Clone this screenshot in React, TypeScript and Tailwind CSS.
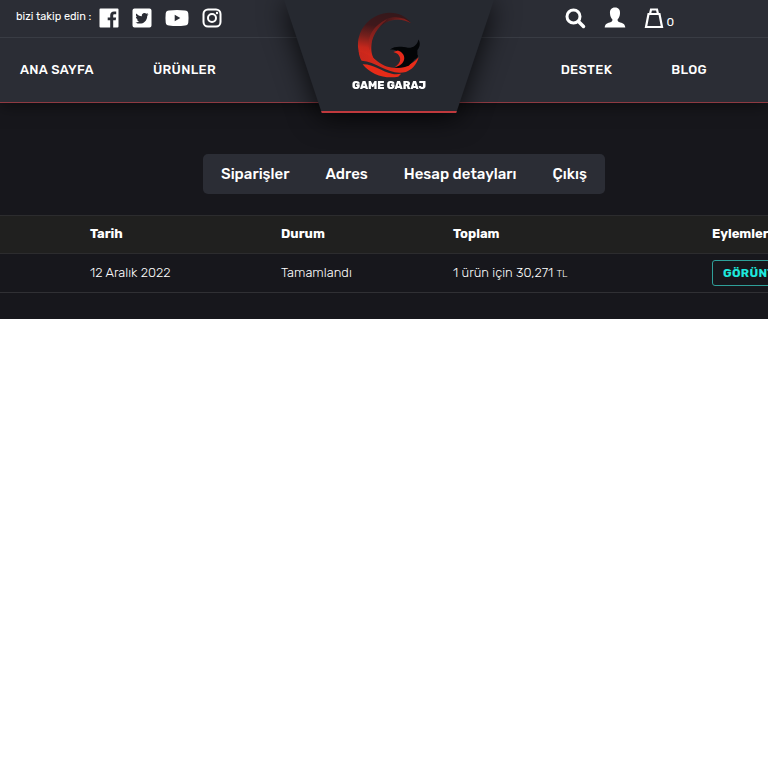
import React from "react";

const social = [
  {
    name: "Facebook",
    width: "w-5",
    box: "0 0 20 20",
    d: "M1.5 0.5h17a1 1 0 0 1 1 1v17a1 1 0 0 1-1 1h-4.3v-7.2h2.5l.4-2.9h-2.9V7.6c0-.9.3-1.4 1.5-1.4h1.5V3.6c-.4 0-1.2-.1-2.2-.1-2.3 0-3.8 1.3-3.8 3.8v2.1H8.7v2.9h2.5v7.2H1.5a1 1 0 0 1-1-1v-17a1 1 0 0 1 1-1z",
  },
  {
    name: "Twitter",
    width: "w-5",
    box: "0 0 20 20",
    d: "M2.5 0.5h15a2 2 0 0 1 2 2v15a2 2 0 0 1-2 2h-15a2 2 0 0 1-2-2v-15a2 2 0 0 1 2-2zM16.5 6.2l-1.5.4 1.1-1.5-1.7.7a2.7 2.7 0 0 0-4.6 2.4C7.5 8.1 5.6 7 4.3 5.4c-.7 1.2-.3 2.8.8 3.6l-1.2-.3c0 1.3.9 2.4 2.2 2.6l-1.2.1c.3 1.1 1.3 1.8 2.5 1.9-1.1.9-2.5 1.3-3.9 1.1 5.5 3.2 11.7-.4 11.7-6.5z",
  },
  {
    name: "YouTube",
    width: "w-6",
    box: "0 0 24 20",
    d: "M4 2.5Q12 1.5 20 2.5Q23 2.7 23.3 5.5Q23.8 10 23.3 14.5Q23 17.3 20 17.5Q12 18.5 4 17.5Q1 17.3.7 14.5Q.2 10 .7 5.5Q1 2.7 4 2.5zM9.7 6.8v6.4l5.6-3.2z",
  },
];

const tabs = ["Siparişler", "Adres", "Hesap detayları", "Çıkış"];

function Logo() {
  return (
    <svg viewBox="35 20 190 200" className="h-[66px] w-[64px]" aria-hidden="true">
      <defs>
        <linearGradient id="moon" x1="0.6" y1="0" x2="0.45" y2="1">
          <stop offset="0" stopColor="#35181b" />
          <stop offset="0.28" stopColor="#3f181b" />
          <stop offset="0.5" stopColor="#76201c" />
          <stop offset="0.72" stopColor="#c4271c" />
          <stop offset="1" stopColor="#e72b1a" />
        </linearGradient>
        <linearGradient id="tip" x1="0" y1="0" x2="1" y2="0">
          <stop offset="0" stopColor="#8a1f1b" stopOpacity="0" />
          <stop offset="1" stopColor="#9c211b" />
        </linearGradient>
        <linearGradient id="wave" x1="0" y1="0" x2="1" y2="0">
          <stop offset="0" stopColor="#c9271c" />
          <stop offset="1" stopColor="#ed2c18" />
        </linearGradient>
      </defs>
      <path
        fill="url(#moon)"
        d="M197 54C180 30 153 19 122 23C73 29 34 71 36 125C37 140 42 154 48 162C68 158 82 166 99 180C81 164 74 143 77 119C80 91 94 68 118 53C144 38 171 39 197 54Z"
      />
      <path d="M72 136C60 104 78 62 124 42C98 66 76 96 72 136Z" fill="#a3241d" opacity="0.5" />
      <path d="M82 148C72 112 84 78 114 54C96 80 84 108 82 148Z" fill="#262930" opacity="0.6" />
      <path fill="url(#tip)" d="M197 54C178 36 150 30 118 42L108 60C136 40 170 38 197 54Z" />
      <path
        fill="url(#wave)"
        d="M38 139C63 143 82 159 101 174C128 194 180 201 220 157C213 180 199 195 181 202C133 215 96 172 47 168C42 160 39 149 38 139Z"
      />
      <path
        fill="#e72b18"
        d="M50 178C83 177 108 200 139 207C150 210 160 208 167 207L158 216C116 224 74 208 50 178Z"
      />
      <path
        fill="#030507"
        d="M133 134C149 121 171 126 187 128C202 129 216 121 219 103C226 113 224 126 216 135L216 149C221 155 214 162 208 163C202 172 193 177 190 183C177 188 163 190 149 188C171 174 176 149 156 139C149 135 141 134 133 134Z"
      />
      <path
        fill="#e52a1b"
        d="M143 141C166 146 174 171 147 187C181 183 187 147 157 137Z"
      />
    </svg>
  );
}

const navLink = "text-[13px] leading-5 font-medium tracking-wide text-white whitespace-nowrap";
const headCell = "pb-0.5 text-left text-[13px] font-bold";

export default function App() {
  return (
    <div className="overflow-hidden bg-white font-[Rubik,Roboto,'Noto_Sans',sans-serif] text-white">
      <div className="bg-[#17171c] pb-[26px]">
        <header className="relative border-b border-[#8e3a42] bg-[#2b2d35] shadow-[0_2px_16px_rgba(0,0,0,0.5)]">
          <div className="flex h-[38px] items-center justify-between border-b border-[#393c44] pr-[94px] pb-0.5 pl-4">
            <div className="flex items-center">
              <span className="mr-2 text-[11px] whitespace-nowrap">bizi takip edin :</span>
              <div className="flex items-center gap-[13px]">
                {social.map((s) => (
                  <a key={s.name} href="#" aria-label={s.name}>
                    <svg viewBox={s.box} className={s.width + " h-5"} fill="#fff" fillRule="evenodd">
                      <path d={s.d} />
                    </svg>
                  </a>
                ))}
                <a href="#" aria-label="Instagram">
                  <svg viewBox="0 0 20 20" className="h-5 w-5" fill="none" stroke="#fff" strokeWidth="2">
                    <rect x="1.5" y="1.5" width="17" height="17" rx="4.5" />
                    <circle cx="10" cy="10" r="4" />
                    <circle cx="15" cy="5" r="1.2" fill="#fff" stroke="none" />
                  </svg>
                </a>
              </div>
            </div>
            <div className="flex items-center gap-[18px]">
              <button type="button" aria-label="Ara">
                <svg viewBox="0 0 22 22" className="h-[22px] w-[22px]" fill="none" stroke="#fff">
                  <circle cx="9.5" cy="9.5" r="6.5" strokeWidth="3" />
                  <path d="M14.5 14.5L19.5 19.5" strokeWidth="3.5" strokeLinecap="round" />
                </svg>
              </button>
              <a href="#" aria-label="Hesabım">
                <svg viewBox="0 0 22 22" className="h-[22px] w-[22px]" fill="#fff">
                  <path d="M11 .5c-3.7 0-5.3 2.5-5 6 .1 2.5 1 4.5 2.3 5.8.4 1.2-.1 2.2-1.3 2.7C3.5 16.3 1 16.5.7 20.5h20.6c-.3-4-2.8-4.2-6.3-5.5-1.2-.5-1.7-1.5-1.3-2.7C15 11 15.9 9 16 6.5c.3-3.5-1.3-6-5-6z" />
                </svg>
              </a>
              <a href="#" aria-label="Sepet" className="flex items-end gap-0.5">
                <svg viewBox="0 0 20 22" className="h-[22px] w-5" fill="none" stroke="#fff" strokeWidth="2.2">
                  <path d="M4.5 7h11l2.5 13H2zM6 7l1-4.5h6l1 4.5" />
                </svg>
                <span className="text-xs leading-[14px]">0</span>
              </a>
            </div>
          </div>
          <nav className="flex h-16 items-center justify-between pr-[61px] pl-5">
            <div className="flex gap-[59px]">
              <a href="#" className={navLink}>ANA SAYFA</a>
              <a href="#" className={navLink}>ÜRÜNLER</a>
            </div>
            <div className="flex gap-[59px]">
              <a href="#" className={navLink}>DESTEK</a>
              <a href="#" className={navLink}>BLOG</a>
            </div>
          </nav>
          <a
            href="#"
            className="absolute top-0 left-1/2 block h-[113px] w-[210px] -translate-x-[100px] drop-shadow-[0_4px_14px_rgba(0,0,0,0.8)]"
          >
            <span className="flex h-full flex-col items-center border-b-2 border-[#c0393d] bg-[#262930] pt-3 [clip-path:polygon(0_0,100%_0,82%_100%,18%_100%)]">
              <Logo />
              <span className="text-[11px] leading-4 font-extrabold whitespace-nowrap">
                GAME GARAJ
              </span>
            </span>
          </a>
        </header>

        <nav className="mt-[51px] ml-10 flex justify-center">
          <div className="flex h-10 items-center gap-9 rounded-[5px] bg-[#2b2d35] px-[18px]">
            {tabs.map((t) => (
              <a key={t} href="#" className="text-[15px] leading-5 font-medium whitespace-nowrap">
                {t}
              </a>
            ))}
          </div>
        </nav>

        <table className="mt-[21px] w-full min-w-[860px] table-fixed border-collapse">
          <colgroup>
            <col className="w-[90px]" />
            <col className="w-[191px]" />
            <col className="w-[172px]" />
            <col className="w-[259px]" />
            <col />
          </colgroup>
          <thead>
            <tr className="h-[38px] border-y border-[#2c2c2e] bg-[#20201f]">
              <td />
              <th className={headCell}>Tarih</th>
              <th className={headCell}>Durum</th>
              <th className={headCell}>Toplam</th>
              <th className={headCell}>Eylemler</th>
            </tr>
          </thead>
          <tbody>
            <tr className="h-[39px] border-b border-[#303034] text-[13px] font-light">
              <td />
              <td>12 Aralık 2022</td>
              <td>Tamamlandı</td>
              <td>
                1 ürün için 30,271 <span className="text-[10px]">TL</span>
              </td>
              <td>
                <a
                  href="#"
                  className="inline-block rounded-[3px] border border-[#2f9f99] px-[10px] text-xs leading-6 font-bold tracking-wide text-[#1ee8dc]"
                >
                  GÖRÜNTÜLE
                </a>
              </td>
            </tr>
          </tbody>
        </table>
      </div>
    </div>
  );
}
